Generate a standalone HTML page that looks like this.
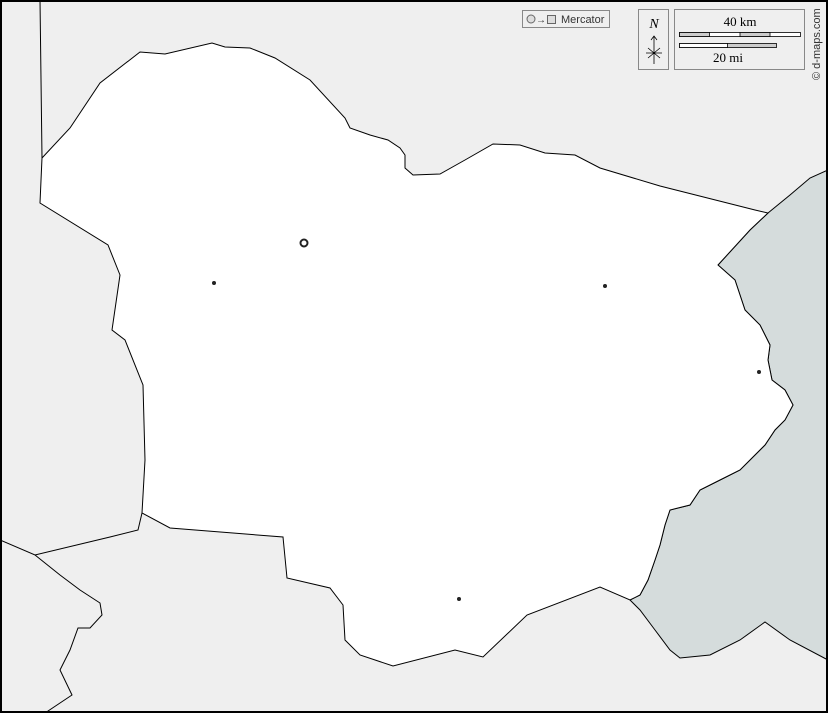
<!DOCTYPE html>
<html><head><style>body{margin:0}svg{display:block}</style></head><body>
<svg width="828" height="713" viewBox="0 0 828 713" xmlns="http://www.w3.org/2000/svg" font-family="Liberation Serif, serif">
<rect x="0" y="0" width="828" height="713" fill="#efefef"/>
<path d="M828,170 L810,178 L790,195 L768,213 L750,230 L718,265 L735,280 L740,295 L745,310 L760,325 L770,345 L768,360 L772,380 L785,390 L793,405 L785,420 L775,430 L765,445 L750,460 L740,470 L720,480 L700,490 L690,505 L670,510 L665,525 L660,545 L655,560 L648,580 L640,595 L630,600 L640,610 L655,630 L670,650 L680,658 L710,655 L740,640 L765,622 L790,640 L828,660 Z" fill="#d5dcdc" stroke="#000" stroke-width="1"/>
<path d="M42,158 L70,128 L100,83 L140,52 L165,54 L212,43 L225,47 L250,48 L275,58 L310,80 L345,118 L350,128 L370,135 L388,140 L400,148 L405,155 L405,168 L413,175 L440,174 L465,160 L493,144 L520,145 L545,153 L575,155 L600,168 L660,186 L755,210 L768,213 L750,230 L718,265 L735,280 L740,295 L745,310 L760,325 L770,345 L768,360 L772,380 L785,390 L793,405 L785,420 L775,430 L765,445 L750,460 L740,470 L720,480 L700,490 L690,505 L670,510 L665,525 L660,545 L655,560 L648,580 L640,595 L630,600 L600,587 L527,615 L483,657 L455,650 L393,666 L360,655 L345,640 L343,605 L330,588 L287,578 L283,537 L170,528 L142,513 L145,460 L143,385 L125,340 L112,330 L120,275 L108,245 L40,203 Z" fill="#fff" stroke="#000" stroke-width="1"/>
<path d="M40,0 L42,158 M142,513 L138,530 L110,537 L35,555 L0,540 M35,555 L60,575 L80,590 L100,603 L102,615 L90,628 L78,628 L70,650 L60,670 L72,695 L45,713" fill="none" stroke="#000" stroke-width="1"/>
<g fill="#222"><circle cx="214" cy="283" r="2"/><circle cx="605" cy="286" r="2"/><circle cx="759" cy="372" r="2"/><circle cx="459" cy="599" r="2"/></g>
<circle cx="304" cy="243" r="3.5" fill="#fff" stroke="#222" stroke-width="2"/>
<rect x="522.5" y="10.5" width="87" height="17" fill="#efefef" stroke="#888"/>
<circle cx="531" cy="19" r="4" fill="#ddd" stroke="#666"/>
<text x="536" y="23" font-size="10" font-family="Liberation Sans, sans-serif" fill="#333">→</text>
<rect x="547.5" y="15.5" width="8" height="8" fill="#ddd" stroke="#666"/>
<text x="561" y="23" font-size="11" font-family="Liberation Sans, sans-serif" fill="#333">Mercator</text>
<rect x="638.5" y="9.5" width="30" height="60" fill="#efefef" stroke="#888"/>
<text x="654" y="28" font-size="14" font-style="italic" text-anchor="middle">N</text>
<path d="M654,36 L654,64 M651,40 L654,36 L657,40 M646,53 L662,53 M648,48 L660,58 M648,58 L660,48" stroke="#000" stroke-width="0.8" fill="none"/>
<rect x="674.5" y="9.5" width="130" height="60" fill="#efefef" stroke="#888"/>
<text x="740" y="26" font-size="13" text-anchor="middle">40 km</text>
<rect x="679.5" y="32.5" width="121" height="4" fill="#fff" stroke="#000" stroke-width="0.8"/>
<rect x="679.5" y="32.5" width="30" height="4" fill="#ccc" stroke="#000" stroke-width="0.8"/>
<rect x="740" y="32.5" width="30" height="4" fill="#ccc" stroke="#000" stroke-width="0.8"/>
<rect x="679.5" y="43.5" width="97" height="4" fill="#ccc" stroke="#000" stroke-width="0.8"/>
<rect x="679.5" y="43.5" width="48" height="4" fill="#fff" stroke="#000" stroke-width="0.8"/>
<text x="728" y="62" font-size="13" text-anchor="middle">20 mi</text>
<text transform="translate(820,80) rotate(-90)" font-size="11" font-family="Liberation Sans, sans-serif" fill="#333">© d-maps.com</text>
<rect x="1" y="1" width="826" height="711" fill="none" stroke="#000" stroke-width="2"/>
</svg>
</body></html>
